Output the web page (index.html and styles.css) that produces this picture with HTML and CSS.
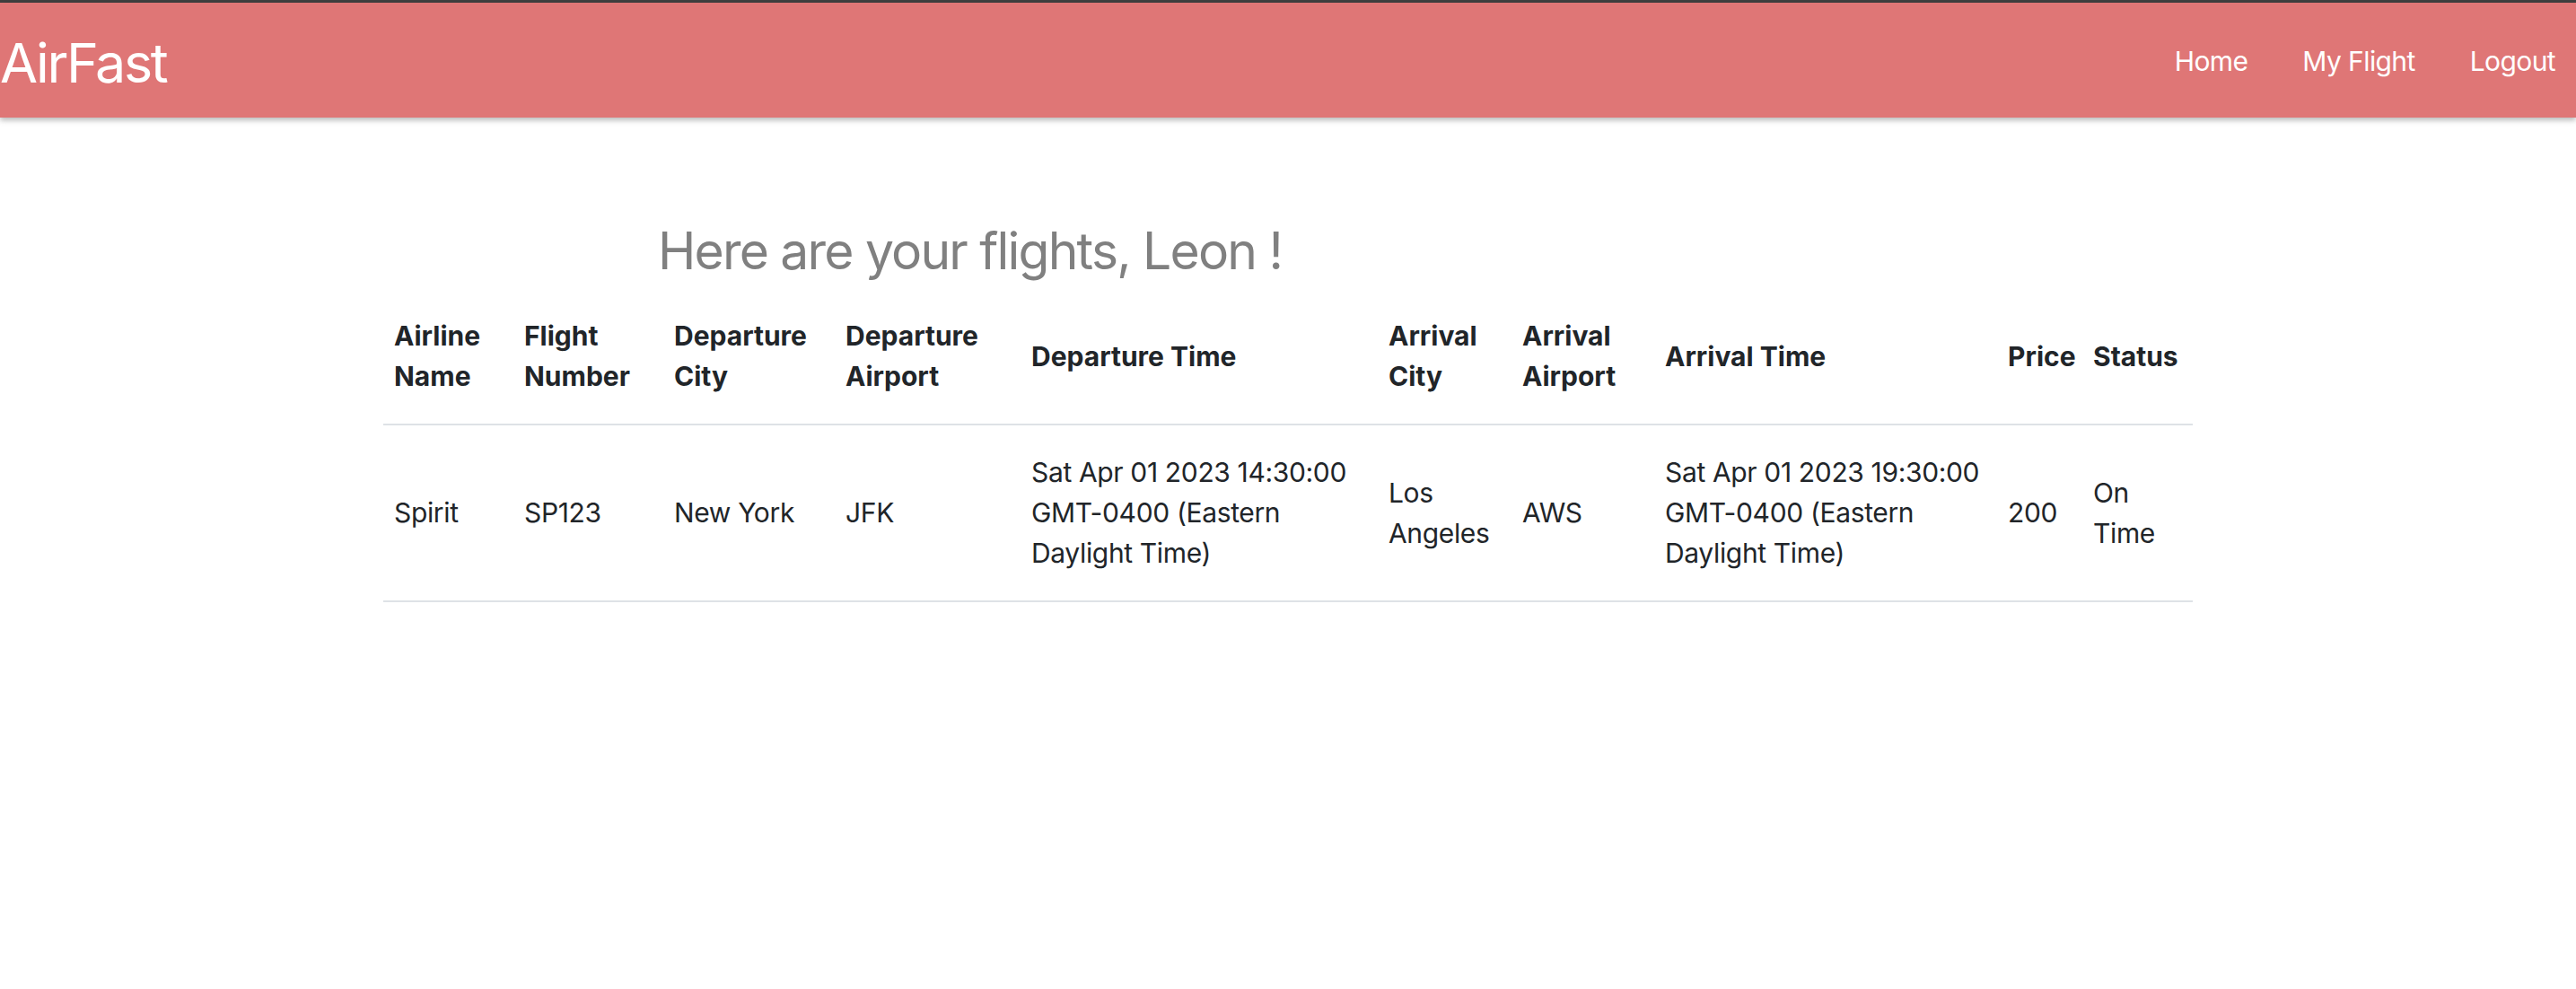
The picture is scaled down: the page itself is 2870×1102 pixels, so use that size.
FILE: index.html
```html
<!DOCTYPE html>
<html lang="en">
<head>
<meta charset="utf-8">
<title>AirFast - My Flights</title>
<link rel="stylesheet" href="styles.css">
</head>
<body>
<div class="frame-top"></div>
<nav class="navbar">
  <a class="brand" href="#">AirFast</a>
  <div class="nav-links">
    <a href="#">Home</a>
    <a href="#">My Flight</a>
    <a href="#">Logout</a>
  </div>
</nav>
<main class="content">
  <h2 class="title">Here are your flights, Leon !</h2>
  <table class="flights">
    <colgroup>
      <col class="c1"><col class="c2"><col class="c3"><col class="c4"><col class="c5">
      <col class="c6"><col class="c7"><col class="c8"><col class="c9"><col class="c10">
    </colgroup>
    <thead>
      <tr>
        <th>Airline Name</th>
        <th>Flight Number</th>
        <th>Departure City</th>
        <th>Departure Airport</th>
        <th>Departure Time</th>
        <th>Arrival City</th>
        <th>Arrival Airport</th>
        <th>Arrival Time</th>
        <th>Price</th>
        <th>Status</th>
      </tr>
    </thead>
    <tbody>
      <tr>
        <td>Spirit</td>
        <td>SP123</td>
        <td>New York</td>
        <td>JFK</td>
        <td>Sat Apr 01 2023 14:30:00 GMT-0400 (Eastern Daylight Time)</td>
        <td>Los Angeles</td>
        <td>AWS</td>
        <td>Sat Apr 01 2023 19:30:00 GMT-0400 (Eastern Daylight Time)</td>
        <td>200</td>
        <td>On Time</td>
      </tr>
    </tbody>
  </table>
</main>
</body>
</html>
```
FILE: styles.css
```css
* { box-sizing: border-box; }
html, body { margin: 0; padding: 0; background: #fff; }
body {
  font-family: Inter, "Noto Sans", "Liberation Sans", sans-serif;
  color: #212529;
  font-size: 30px;
  line-height: 45px;
}
.frame-top { height: 3px; background: #3f3f3f; }
.navbar {
  height: 128px;
  background: #df7676;
  display: flex;
  align-items: center;
  justify-content: space-between;
  padding: 0 23px 0 0;
  box-shadow: 0 3px 6px rgba(0,0,0,0.28);
  position: relative;
}
.brand {
  color: #fff;
  text-decoration: none;
  font-size: 61px;
  line-height: 72px;
  letter-spacing: -2.4px;
  margin-top: 6px;
}
.nav-links { display: flex; gap: 61px; margin-top: 2px; }
.nav-links a {
  color: #fff;
  text-decoration: none;
  font-size: 30px;
  line-height: 45px;
  letter-spacing: -0.6px;
}
.content { padding-top: 113px; }
.title {
  margin: 0 0 6px 733px;
  font-size: 57px;
  line-height: 72px;
  font-weight: 400;
  color: #808080;
  letter-spacing: -1.8px;
}
.flights {
  margin: 0 auto;
  width: 2016px;
  table-layout: fixed;
  border-collapse: collapse;
}
.flights th, .flights td {
  padding: 30px 12px;
  text-align: left;
  vertical-align: middle;
  border-bottom: 2px solid #dee2e6;
}
.flights th { font-weight: 700; }
.flights td { letter-spacing: -0.35px; }
.c1 { width: 145px; } .c2 { width: 167px; } .c3 { width: 191px; } .c4 { width: 207px; }
.c5 { width: 398px; } .c6 { width: 149px; } .c7 { width: 159px; } .c8 { width: 382px; }
.c9 { width: 95px; } .c10 { width: 123px; }
```
